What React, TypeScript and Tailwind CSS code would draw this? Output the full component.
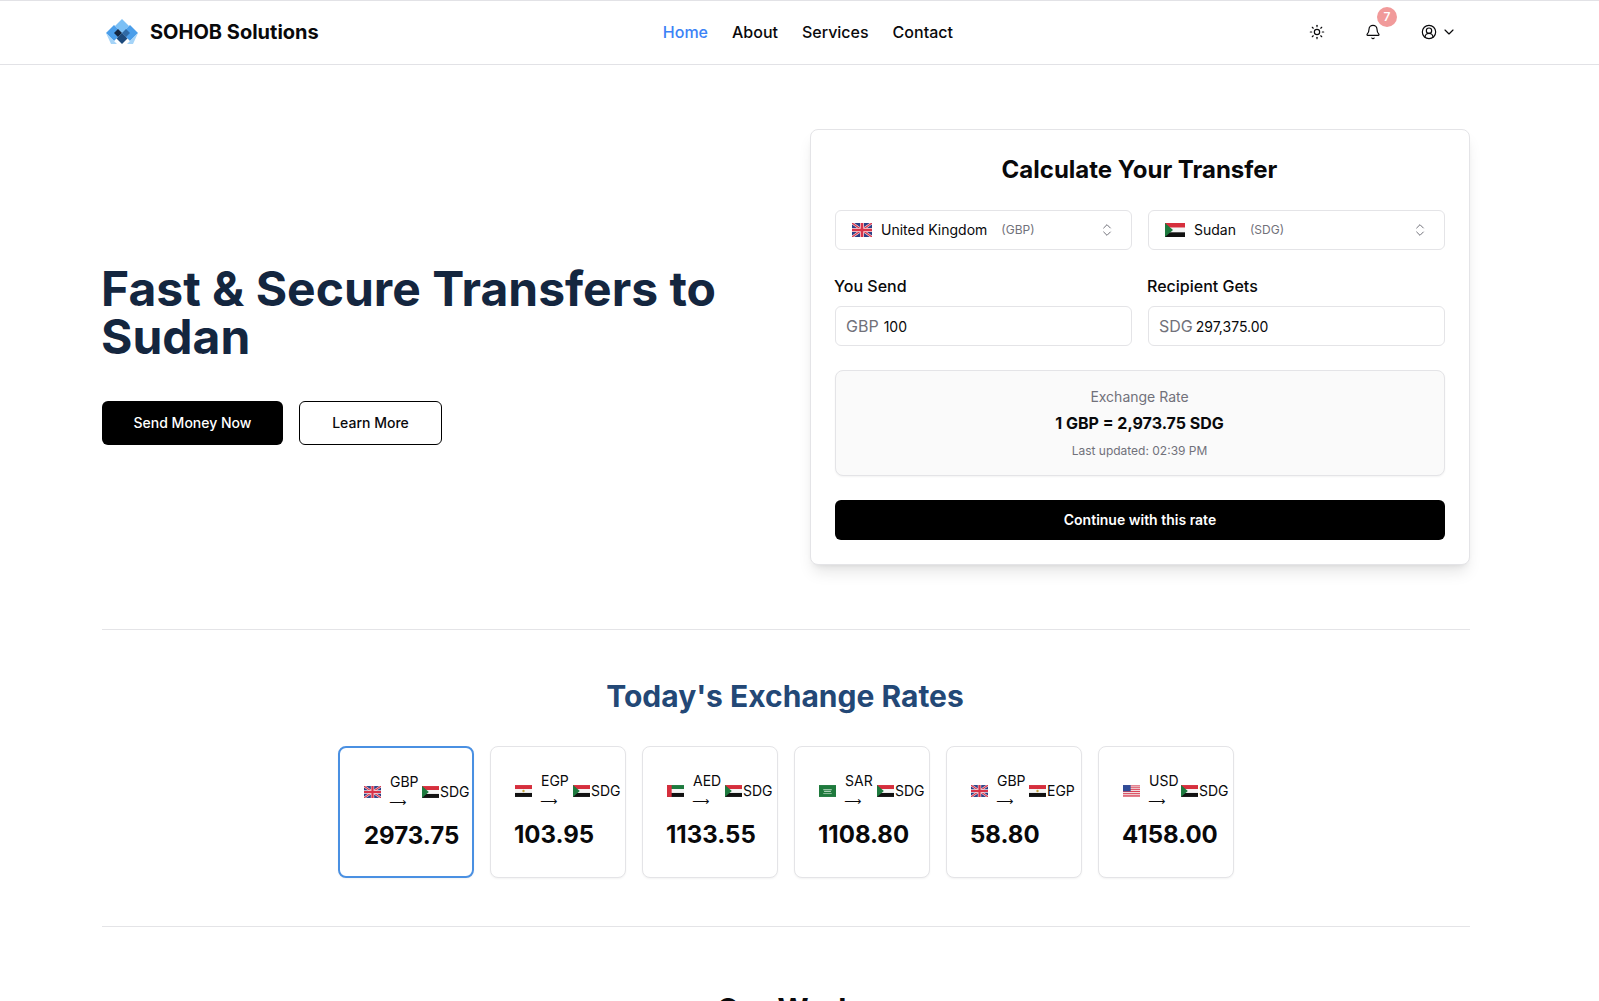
import { type FC } from 'react'
import { Sun, Bell, CircleUserRound, ChevronDown, ChevronsUpDown } from 'lucide-react'

type FlagCode = 'gb' | 'sd' | 'eg' | 'ae' | 'sa' | 'us'

// Emoji fonts are not installed, so the flags are small drawings
const Flag: FC<{ code: FlagCode; className?: string }> = ({ code, className }) => (
  <svg viewBox="0 0 20 14" className={className}>
    {code === 'gb' && (
      <g>
        <rect width="20" height="14" fill="#2b3f86" />
        <path d="M0 0L20 14M20 0L0 14" stroke="#f3d5da" strokeWidth="2.6" />
        <path d="M0 0L20 14M20 0L0 14" stroke="#d8344a" strokeWidth="1.2" />
        <path d="M10 0V14M0 7H20" stroke="#f6dfe2" strokeWidth="4" />
        <path d="M10 0V14M0 7H20" stroke="#d8344a" strokeWidth="2.6" />
      </g>
    )}
    {code === 'sd' && (
      <g>
        <rect width="20" height="4.7" fill="#d62f3d" />
        <rect y="4.7" width="20" height="4.6" fill="#f5f5f5" />
        <rect y="9.3" width="20" height="4.7" fill="#111" />
        <path d="M0 0L8 7L0 14Z" fill="#1d7a3e" />
      </g>
    )}
    {code === 'eg' && (
      <g>
        <rect width="20" height="4.7" fill="#d62f3d" />
        <rect y="4.7" width="20" height="4.6" fill="#f5f5f5" />
        <rect y="9.3" width="20" height="4.7" fill="#111" />
        <circle cx="10" cy="7" r="1.4" fill="#c9a53a" />
      </g>
    )}
    {code === 'ae' && (
      <g>
        <rect width="20" height="4.7" fill="#1d7a3e" />
        <rect y="4.7" width="20" height="4.6" fill="#f5f5f5" />
        <rect y="9.3" width="20" height="4.7" fill="#111" />
        <rect width="5.5" height="14" fill="#d62f3d" />
      </g>
    )}
    {code === 'sa' && (
      <g>
        <rect width="20" height="14" fill="#1f7a3d" />
        <path d="M5 5.5H15M6 7.5H14" stroke="#d6eadb" strokeWidth="1" />
        <path d="M5 10H15" stroke="#d6eadb" strokeWidth="0.7" />
      </g>
    )}
    {code === 'us' && (
      <g>
        <rect width="20" height="14" fill="#f4f4f4" />
        <path d="M0 1H20M0 3.2H20M0 5.4H20M0 7.6H20M0 9.8H20M0 12H20" stroke="#d8344a" strokeWidth="1.1" />
        <path d="M0 13.6H20" stroke="#d8344a" strokeWidth="0.8" />
        <rect width="9" height="7.4" fill="#2f4b97" />
      </g>
    )}
  </svg>
)

const Logo: FC = () => (
  <svg viewBox="0 0 34 26" className="w-[34px] h-[26px] ml-px">
    <path d="M17 0L24 7L17 14L10 7Z" fill="#7cc0f5" />
    <path d="M9 6L17 14L9 22L1 14Z" fill="#4a9eea" />
    <path d="M25 6L33 14L25 22L17 14Z" fill="#4a9eea" />
    <path d="M1 14L9 22L12 25L6 25Z" fill="#a5d4f8" />
    <path d="M33 14L25 22L22 25L28 25Z" fill="#a5d4f8" />
    <path d="M13 10L17 14L13 18L9 14Z" fill="#14263f" />
    <path d="M21 10L25 14L21 18L17 14Z" fill="#2f6aa6" />
    <path d="M17 14L22.5 19.5L17 25L11.5 19.5Z" fill="#1d4a7c" />
  </svg>
)

const NavLinks = [
  { label: 'Home', active: true },
  { label: 'About' },
  { label: 'Services' },
  { label: 'Contact' },
]

const rates: { from: FlagCode; to: FlagCode; base: string; quote: string; value: string }[] = [
  { from: 'gb', to: 'sd', base: 'GBP', quote: 'SDG', value: '2973.75' },
  { from: 'eg', to: 'sd', base: 'EGP', quote: 'SDG', value: '103.95' },
  { from: 'ae', to: 'sd', base: 'AED', quote: 'SDG', value: '1133.55' },
  { from: 'sa', to: 'sd', base: 'SAR', quote: 'SDG', value: '1108.80' },
  { from: 'gb', to: 'eg', base: 'GBP', quote: 'EGP', value: '58.80' },
  { from: 'us', to: 'sd', base: 'USD', quote: 'SDG', value: '4158.00' },
]

const CountrySelect: FC<{ flag: FlagCode; name: string; code: string }> = ({ flag, name, code }) => (
  <div className="h-10 flex items-center rounded-md border border-[#e4e4e7] bg-white px-4 text-sm text-[#09090b]">
    <Flag code={flag} className="w-5 h-[14px] mr-[9px]" />
    <span>{name}</span>
    <span className="ml-[14px] text-xs text-[#71717a]">({code})</span>
    <ChevronsUpDown className="ml-auto w-4 h-4 text-[#71717a]" strokeWidth={1.5} />
  </div>
)

const AmountField: FC<{ label: string; prefix: string; value: string; prefixClass: string }> = ({
  label,
  prefix,
  value,
  prefixClass,
}) => (
  <div className="flex flex-col gap-[8px]">
    <label className="-ml-px text-base leading-[24px] font-medium text-[#09090b]">{label}</label>
    <div className="h-10 flex items-center rounded-md border border-[#e4e4e7] bg-white px-[10px]">
      <span className={`text-base text-[#71717a] ${prefixClass}`}>{prefix}</span>
      <span className="text-sm text-[#09090b] mt-[2px]">{value}</span>
    </div>
  </div>
)

const App: FC = () => {
  return (
    <div className="min-h-screen h-[1001px] overflow-hidden bg-white text-[#09090b] font-['Inter',sans-serif]">
      {/* Navbar */}
      <header className="h-[65px] border-t border-b border-[#e2e2e6] bg-white">
        <div className="w-[1572px] h-full pl-[104px] pr-[115px] pb-[2px] flex items-center justify-between">
          <div className="flex items-center gap-[11px]">
            <Logo />
            <span className="text-xl font-bold">SOHOB Solutions</span>
          </div>
          <nav className="flex items-center gap-6 text-base font-[450] mr-[12px]">
            {NavLinks.map((l) => (
              <a key={l.label} className={l.active ? 'text-[#3b82f6]' : 'text-[#09090b]'}>
                {l.label}
              </a>
            ))}
          </nav>
          <div className="flex items-center">
            <Sun className="w-4 h-4" strokeWidth={1.75} />
            <div className="relative ml-10">
              <Bell className="w-4 h-4" strokeWidth={1.75} />
              <span className="absolute -top-[17px] left-[12px] w-5 h-5 rounded-full bg-[#f19a9a] text-white text-xs font-semibold flex items-center justify-center">
                7
              </span>
            </div>
            <div className="flex items-center gap-1 ml-[40px]">
              <CircleUserRound className="w-4 h-4" strokeWidth={1.75} />
              <ChevronDown className="w-4 h-4" strokeWidth={1.75} />
            </div>
          </div>
        </div>
      </header>

      <main className="w-[1572px] px-[102px]">
        {/* Hero */}
        <section className="grid grid-cols-[1fr_660px] gap-[48px] pt-16 pb-16 border-b border-[#e4e4e7]">
          <div className="flex flex-col justify-center pt-[15px]">
            <h1 className="-ml-px text-5xl leading-[48px] font-bold text-[#14263f]">
              Fast &amp; Secure Transfers to Sudan
            </h1>
            <div className="flex gap-4 mt-[40px]">
              <button className="h-11 w-[181px] rounded-md bg-black text-white text-sm font-medium">Send Money Now</button>
              <button className="h-11 w-[143px] rounded-md border border-black bg-white text-sm font-medium">Learn More</button>
            </div>
          </div>

          {/* Calculator */}
          <div className="rounded-lg border border-[#e4e4e7] bg-white p-6 shadow-lg">
            <h2 className="text-2xl leading-8 font-bold text-center pr-px">Calculate Your Transfer</h2>
            <div className="grid grid-cols-2 gap-4 mt-6">
              <CountrySelect flag="gb" name="United Kingdom" code="GBP" />
              <CountrySelect flag="sd" name="Sudan" code="SDG" />
            </div>
            <div className="grid grid-cols-2 gap-4 mt-6">
              <AmountField label="You Send" prefix="GBP" value="100" prefixClass="mr-[5px]" />
              <AmountField label="Recipient Gets" prefix="SDG" value="297,375.00" prefixClass="mr-[3px]" />
            </div>
            <div className="mt-6 h-[106px] rounded-lg border border-[#e4e4e7] bg-[#fafafa] shadow-xs flex flex-col items-center justify-center pb-[2px] pr-px">
              <p className="text-sm leading-5 text-[#71717a]">Exchange Rate</p>
              <p className="text-base leading-6 font-bold mt-[4px]">1 GBP = 2,973.75 SDG</p>
              <p className="text-xs leading-4 text-[#71717a] mt-[8px] -mb-px">Last updated: 02:39 PM</p>
            </div>
            <button className="mt-6 w-full h-10 rounded-md bg-black text-white text-sm font-semibold">
              Continue with this rate
            </button>
          </div>
        </section>

        {/* Rates */}
        <section className="pt-[48px] pb-[48px] border-b border-[#e4e4e7]">
          <h2 className="text-[30px] leading-9 font-bold text-[#234876] text-center pr-[2px]">Today's Exchange Rates</h2>
          <div className="flex justify-center gap-4 mt-[32px]">
            {rates.map((r, i) => (
              <div
                key={r.base + r.quote}
                className={`w-[136px] h-[132px] rounded-lg bg-white pl-6 pt-6 shadow-xs ${
                  i === 0 ? 'border-2 border-[#4a90e2]' : 'border border-[#e4e4e7]'
                }`}
              >
                <div className="flex items-center text-sm leading-5 whitespace-nowrap">
                  <Flag code={r.from} className="w-[17px] h-[12px]" />
                  <span className="ml-[9px] mr-[5px] w-[27px] flex flex-col">
                    <span>{r.base}</span>
                    <span className="-ml-px text-xs font-['DejaVu_Sans',sans-serif] leading-[20px]">⟶</span>
                  </span>
                  <Flag code={r.to} className="w-[17px] h-[12px]" />
                  <span className="ml-px">{r.quote}</span>
                </div>
                <div className={`text-2xl leading-8 font-bold mt-[8px] ${i === 0 ? '' : '-ml-px'}`}>{r.value}</div>
              </div>
            ))}
          </div>
        </section>

        <section className="pt-[64px]">
          <h2 className="text-[30px] leading-9 font-bold text-center text-[#09090b]">Our Work</h2>
        </section>
      </main>
    </div>
  )
}

export default App
